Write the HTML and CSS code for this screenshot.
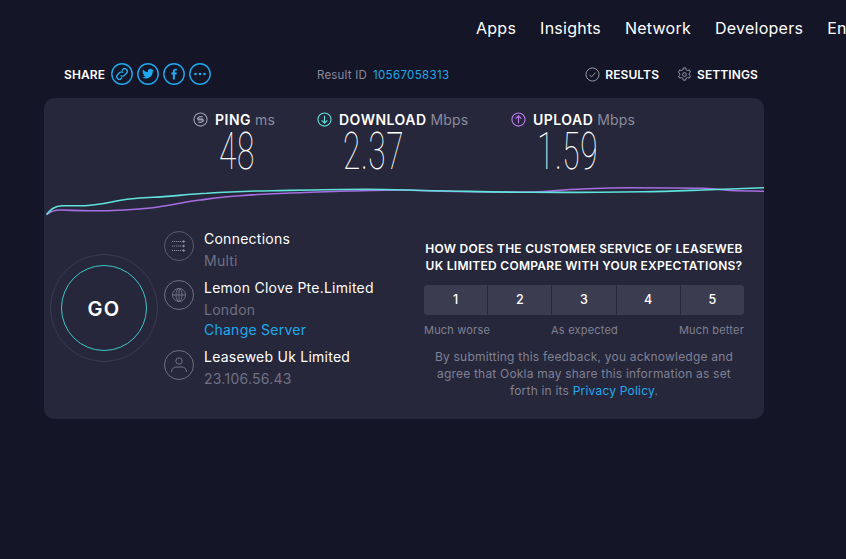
FILE: index.html
```html
<!DOCTYPE html>
<html lang="en">
<head>
<meta charset="utf-8">
<title>Speedtest Result</title>
<link rel="stylesheet" href="styles.css">
</head>
<body>
<nav class="nav">
  <a>Apps</a><a>Insights</a><a>Network</a><a>Developers</a><a>Enterprise</a>
</nav>
<div class="wrap">
  <div class="toolbar">
    <div class="share">
      <span class="share-label">SHARE</span>
      <span class="share-icons">
        <svg class="sicon" viewBox="0 0 22 22"><circle cx="11" cy="11" r="10.2"/><path d="M9.6 12.4a2.6 2.6 0 0 0 3.7 0l2.2-2.2a2.6 2.6 0 0 0-3.7-3.7l-.9.9M12.4 9.6a2.6 2.6 0 0 0-3.7 0l-2.2 2.2a2.6 2.6 0 0 0 3.7 3.7l.9-.9"/></svg>
        <svg class="sicon" viewBox="0 0 22 22"><circle cx="11" cy="11" r="10.2"/><path class="fill" d="M17 7.2c-.5.2-.9.3-1.4.4.5-.3.9-.8 1.1-1.4-.5.3-1 .5-1.6.6a2.4 2.4 0 0 0-4.2 2.2c-2-.1-3.800-1-5-2.600-.7 1.100-.3 2.500.7 3.200-.4 0-.7-.1-1.100-.3 0 1.200.8 2.200 1.900 2.400-.3.100-.7.100-1.100 0 .3 1 1.200 1.700 2.300 1.700a4.900 4.900 0 0 1-3.600 1c3.500 2.200 10.800 1 10.800-6.500.5-.4.9-.8 1.200-1.300z"/></svg>
        <svg class="sicon" viewBox="0 0 22 22"><circle cx="11" cy="11" r="10.2"/><path class="fill" d="M11.900 16.500v-5h1.600l.3-1.900h-1.900V8.400c0-.6.200-.9.900-.9h1V5.800c-.4-.1-.9-.1-1.400-.1-1.500 0-2.500.9-2.500 2.500v1.400H8.300v1.900h1.600v5z"/></svg>
        <svg class="sicon" viewBox="0 0 22 22"><circle cx="11" cy="11" r="10.2"/><circle class="fill" cx="6.500" cy="11" r="1.300"/><circle class="fill" cx="11" cy="11" r="1.300"/><circle class="fill" cx="15.500" cy="11" r="1.300"/></svg>
      </span>
    </div>
    <div class="result-id"><span>Result ID</span><a class="link">10567058313</a></div>
    <div class="actions">
      <span class="action">
        <svg class="aicon" viewBox="0 0 16 16"><circle cx="8" cy="8" r="7"/><path d="M4.800 8.300l2.200 2.200 4.200-4.500"/></svg>
        RESULTS
      </span>
      <span class="action">
        <svg class="aicon" viewBox="0 0 16 16"><path d="M6.700 1h2.600l.4 2 1.500.8 1.900-.7 1.300 2.300-1.500 1.300v1.600l1.500 1.300-1.300 2.300-1.900-.7-1.500.8-.4 2H6.700l-.4-2-1.500-.8-1.900.7-1.300-2.300 1.500-1.300V7.700L1.600 5.400l1.300-2.300 1.900.7 1.500-.8z"/><circle cx="8" cy="8" r="2"/></svg>
        SETTINGS
      </span>
    </div>
  </div>

  <section class="panel">
    <div class="metrics">
      <div class="metric">
        <div class="metric-head">
          <svg class="micon grey" viewBox="0 0 16 16"><circle cx="8" cy="8" r="7"/><path d="M4.500 7.500c.8-2.200 3.500-3.200 6-2.200M4.500 7.500h6.500M11.500 8.500c-.8 2.200-3.500 3.200-6 2.200M11.500 8.500H5"/></svg>
          <b>PING</b><span>ms</span>
        </div>
        <div class="value">48</div>
      </div>
      <div class="metric">
        <div class="metric-head">
          <svg class="micon teal" viewBox="0 0 16 16"><circle cx="8" cy="8" r="7"/><path d="M8 4v8M5 9l3 3 3-3"/></svg>
          <b>DOWNLOAD</b><span>Mbps</span>
        </div>
        <div class="value">2.37</div>
      </div>
      <div class="metric">
        <div class="metric-head">
          <svg class="micon purple" viewBox="0 0 16 16"><circle cx="8" cy="8" r="7"/><path d="M8 12V4M5 7l3-3 3 3"/></svg>
          <b>UPLOAD</b><span>Mbps</span>
        </div>
        <div class="value">1.59</div>
      </div>
    </div>

    <svg class="graph" viewBox="44 184 720 34" preserveAspectRatio="none">
      <path class="line-up" d="M46.500 214.500C50 212 54 210 60 210C70 210 76 210.800 90 210.800C105 210.800 135 209.800 153 207.700C170 205.500 185 202 200 200C215 198 225 196.500 240 195.700C265 194 285 193 300 192.700C320 192.200 335 191.200 350 191C370 190.500 385 190 400 190C415 190 420 190.700 433 191C470 191.800 500 192.200 533 192C550 191.800 555 190.500 570 189.500C590 188.500 610 187.700 627 187.700C650 187.700 685 187.800 703 188.300C720 189 725 190.300 737 190.700C750 191 757 191.200 764 191.300"/>
      <path class="line-down" d="M46.500 214.500C50 210.500 54 205.700 62 205.700C70 205.700 76 206 85 205.700C100 205 112 201.500 127 199.300C137 198 145 197.500 153 197.300C170 196.500 190 194 207 193.300C225 192 250 191 273 190.700C295 190.300 330 189.400 367 189.300C390 189.300 410 190.300 433 190.700C470 191.300 500 192.300 533 192.300C570 192.500 610 192.200 643 191.700C665 191.400 685 190.600 703 190C725 189.200 745 188.300 764 187.700"/>
    </svg>

    <div class="bottom">
      <div class="go-wrap">
        <div class="go-outer"><div class="go-inner">GO</div></div>
      </div>

      <div class="info">
        <div class="info-row conn">
          <svg class="iicon" viewBox="0 0 30 30"><circle cx="15" cy="15" r="14.500"/><path class="dash" d="M8 10.500h11M8 15h11M8 19.500h11"/><path class="arrow" d="M19 9l2.500 1.500L19 12zM19 13.500l2.500 1.500-2.500 1.500zM19 18l2.500 1.500L19 21z"/></svg>
          <div class="info-text">
            <div class="info-title">Connections</div>
            <div class="info-sub">Multi</div>
          </div>
        </div>
        <div class="info-row server">
          <svg class="iicon" viewBox="0 0 30 30"><circle cx="15" cy="15" r="14.500"/><circle cx="15" cy="15" r="6.500"/><ellipse cx="15" cy="15" rx="3" ry="6.500"/><path d="M8.500 15h13M15 8.500v13"/></svg>
          <div class="info-text">
            <div class="info-title">Lemon Clove Pte.Limited</div>
            <div class="info-sub">London</div>
            <a class="link change">Change Server</a>
          </div>
        </div>
        <div class="info-row isp">
          <svg class="iicon" viewBox="0 0 30 30"><circle cx="15" cy="15" r="14.500"/><circle cx="15" cy="11" r="3.200"/><path d="M7.500 22c0-3.500 2.500-5 4.500-5h6c2 0 4.500 1.500 4.500 5"/></svg>
          <div class="info-text">
            <div class="info-title">Leaseweb Uk Limited</div>
            <div class="info-sub">23.106.56.43</div>
          </div>
        </div>
      </div>

      <div class="survey">
        <h2 class="survey-q">HOW DOES THE CUSTOMER SERVICE OF LEASEWEB UK LIMITED COMPARE WITH YOUR EXPECTATIONS?</h2>
        <div class="scale">
          <span>1</span><span>2</span><span>3</span><span>4</span><span>5</span>
        </div>
        <div class="scale-labels">
          <span>Much worse</span><span>As expected</span><span>Much better</span>
        </div>
        <p class="legal">By submitting this feedback, you acknowledge and agree that Ookla may share this information as set forth in its <a class="link">Privacy Policy</a>.</p>
      </div>
    </div>
  </section>
</div>
</body>
</html>
```
FILE: styles.css
```css
* { box-sizing: border-box; }
html, body { margin: 0; height: 100%; }
body {
  background: #141526;
  color: #fff;
  font-family: Inter, "Noto Sans", sans-serif;
  overflow: hidden;
}
.link { color: #1fa9ee; }

.nav {
  display: flex;
  gap: 24px;
  height: 56px;
  padding-left: 476px;
  align-items: center;
  white-space: nowrap;
  font-size: 16px;
  letter-spacing: 0.25px;
  overflow: hidden;
}
.wrap { width: 720px; margin-left: 44px; }

.toolbar {
  display: flex;
  align-items: center;
  height: 36px;
  padding: 1px 6px 0 20px;
  margin-bottom: 6px;
  font-size: 11.500px;
}
.share { display: flex; align-items: center; width: 253px; }
.share-label { font-weight: 600; width: 47px; font-size: 12px; letter-spacing: .1px; }
.share-icons { display: flex; gap: 4px; margin-top: -2px; }
.sicon { width: 22px; height: 22px; fill: none; stroke: #1fa9ee; stroke-width: 1.400; }
.sicon .fill { fill: #1fa9ee; stroke: none; }
.result-id { display: flex; gap: 6px; flex: 1; color: #8a8b9c; letter-spacing: .2px; }
.result-id .link { letter-spacing: .35px; }
.actions { display: flex; gap: 18px; font-size: 12px; letter-spacing: .1px; }
.action { display: flex; align-items: center; gap: 5px; font-weight: 600; }
.aicon { width: 15px; height: 15px; fill: none; stroke: #9c9dad; stroke-width: 1; }

.panel {
  background: #26273a;
  border-radius: 10px;
  height: 321px;
  overflow: hidden;
}
.metrics {
  display: grid;
  grid-template-columns: 124px 194px auto;
  padding: 12px 0 0 149px;
  height: 86px;
}
.metric-head {
  display: flex;
  align-items: center;
  font-size: 14px;
  height: 18px;
}
.metric-head b { font-weight: 600; margin: 0 4px 0 7px; letter-spacing: .5px; }
.metric-head span { color: #8a8b9f; letter-spacing: .1px; }
.micon { width: 15px; height: 15px; fill: none; stroke-width: 1.200; }
.micon.grey { stroke: #9c9dad; }
.micon.teal { stroke: #5fe3dc; }
.micon.purple { stroke: #bb7cf0; }
.value {
  font-family: Roboto, sans-serif;
  font-weight: 100;
  font-size: 51px;
  line-height: 48px;
  margin-left: 26px;
  transform: scaleX(.62);
  transform-origin: 0 50%;
  letter-spacing: 1px;
  white-space: nowrap;
}

.graph { display: block; width: 720px; height: 34px; }
.line-down, .line-up { fill: none; stroke-width: 1.600; }
.line-down { stroke: #5fe3dc; }
.line-up { stroke: #a66ee0; }

.bottom {
  display: flex;
  align-items: flex-start;
  height: 201px;
}
.go-wrap { width: 120px; padding: 36px 0 0 6px; }
.go-outer {
  width: 108px;
  height: 108px;
  border: 1px solid #3a3c50;
  border-radius: 50%;
  display: flex;
  align-items: center;
  justify-content: center;
}
.go-inner {
  width: 86px;
  height: 86px;
  border: 1px solid #3cc6cc;
  border-radius: 50%;
  display: flex;
  align-items: center;
  justify-content: center;
  font-size: 20px;
  letter-spacing: 1.200px;
  font-weight: 600;
  padding-top: 1px;
}

.info { width: 260px; display: flex; flex-direction: column; padding-top: 13px; }
.info-row { display: flex; gap: 10px; }
.info-row.conn { height: 49px; }
.info-row.server { height: 70px; }
.iicon { width: 30px; height: 30px; flex: none; fill: none; stroke: #5c5d70; stroke-width: 1; }
.iicon .dash { stroke-dasharray: 1.200 .8; stroke: #8a8b9c; }
.iicon .arrow { fill: #8a8b9c; stroke: none; }
.info-row.isp .iicon circle, .info-row.isp .iicon path,
.info-row.server .iicon circle, .info-row.server .iicon ellipse, .info-row.server .iicon path { stroke: #707184; }
.info-text { margin-top: -3px; font-size: 14px; letter-spacing: .25px; }
.info-row.isp .info-text { margin-top: -4px; }
.info-title { line-height: 22px; height: 22px; }
.info-sub { line-height: 22px; height: 22px; color: #6f7083; }
.change { display: block; line-height: 18px; }

.survey { width: 320px; padding-top: 22px; text-align: center; }
.survey-q {
  margin: 0;
  font-size: 12px;
  line-height: 17px;
  font-weight: 600;
  letter-spacing: .28px;
}
.scale { display: flex; gap: 1px; margin-top: 11px; }
.scale span {
  flex: 1;
  height: 30px;
  line-height: 30px;
  background: #3b3c4f;
  font-size: 12.500px;
  font-weight: 500;
}
.scale span:first-child { border-radius: 3px 0 0 3px; }
.scale span:last-child { border-radius: 0 3px 3px 0; }
.scale-labels {
  display: flex;
  justify-content: space-between;
  margin-top: 8px;
  font-size: 11px;
  line-height: 14px;
  color: #7f8094;
  letter-spacing: .2px;
}
.legal {
  margin: 11px 0 0;
  font-size: 12px;
  line-height: 17px;
  color: #7f8094;
  letter-spacing: .2px;
}
```
